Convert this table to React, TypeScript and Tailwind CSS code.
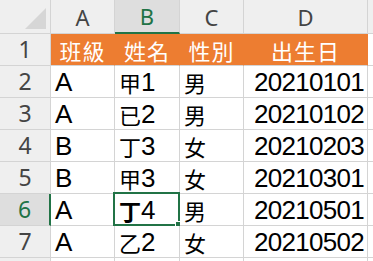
import React from 'react';

const COLS = ['A', 'B', 'C', 'D', ''];

const ROWS: string[][] = [
  ['班級', '姓名', '性別', '出生日'],
  ['A', '甲1', '男', '20210101'],
  ['A', '已2', '男', '20210102'],
  ['B', '丁3', '女', '20210203'],
  ['B', '甲3', '女', '20210301'],
  ['A', '丁4', '男', '20210501'],
  ['A', '乙2', '女', '20210502'],
  ['', '', '', ''],
];

const latin = '"Liberation Sans", Arial, sans-serif';
const cjk = '"Noto Sans CJK TC", "Noto Sans CJK SC", sans-serif';

// split text into CJK / latin runs so each gets its own font size
function CellText({ text, boldCjk }: { text: string; boldCjk?: boolean }) {
  const parts = text.match(/[\u3400-\u9fff]+|[^\u3400-\u9fff]+/g) || [];
  return (
    <>
      {parts.map((p, i) =>
        /[\u3400-\u9fff]/.test(p) ? (
          <span key={i} className={`text-[22px] ${boldCjk ? 'font-bold' : ''}`} style={{ fontFamily: cjk }}>
            {p}
          </span>
        ) : (
          <span key={i} className="text-[26px] tracking-[-0.7px]" style={{ fontFamily: latin }}>
            {p}
          </span>
        )
      )}
    </>
  );
}

export default function App() {
  return (
    <div className="w-[373px] h-[261px] overflow-hidden bg-white">
      <div className="grid grid-cols-[51px_64px_65px_64px_124px_20px] grid-rows-[34px_repeat(8,32px)]">
        {/* corner */}
        <div className="bg-[#efefef] border-r border-b border-[#d4d4d4] relative">
          <svg width="50" height="33" className="absolute left-0 top-0">
            <polygon points="46,8 46,29 25,29" fill="#d6d6d6" />
          </svg>
        </div>
        {COLS.map((c, i) => (
          <div
            key={i}
            className={`flex items-center justify-center border-r border-[#d4d4d4] text-[22px] leading-none ${
              c === 'B'
                ? 'bg-[#dedede] text-[#217346] border-b-2 border-b-[#217346]'
                : 'bg-[#efefef] text-[#444444] border-b border-b-[#d4d4d4]'
            }`}
            style={{ fontFamily: '"Noto Sans", "Open Sans", sans-serif' }}
          >
            {c}
          </div>
        ))}

        {ROWS.map((row, ri) => {
          const n = ri + 1;
          const sel = n === 6;
          return (
            <React.Fragment key={n}>
              <div
                className={`flex items-center justify-center border-b border-[#d4d4d4] text-[23px] leading-none ${
                  sel
                    ? 'bg-[#dedede] text-[#217346] border-r-2 border-r-[#217346]'
                    : 'bg-[#efefef] text-[#444444] border-r border-r-[#d4d4d4]'
                }`}
                style={{ fontFamily: '"Noto Sans", "Open Sans", sans-serif' }}
              >
                {n < 8 ? n : ''}
              </div>
              {row.map((v, ci) => {
                const head = n === 1;
                const isDate = ci === 3 && !head;
                const isSel = sel && ci === 1;
                return (
                  <div
                    key={ci}
                    className={`relative flex items-center leading-none ${
                      head
                        ? 'bg-[#ed7d31] text-white justify-center border-r border-b border-r-[#ed7d31] border-b-[#d4d4d4]'
                        : 'bg-white text-black border-r border-b border-[#d4d4d4]'
                    } ${isDate ? 'justify-end pr-[3px]' : head ? '' : 'pl-[4px]'}`}
                  >
                    {head ? (
                      <span className="text-[22px] tracking-[1px]" style={{ fontFamily: cjk }}>
                        {v}
                      </span>
                    ) : (
                      <CellText text={v} boldCjk={isSel} />
                    )}
                    {isSel && (
                      <div className="absolute -left-[2px] -top-[2px] -right-[1px] -bottom-[1px] border-2 border-[#217346]">
                        <div className="absolute -right-[4px] -bottom-[4px] w-[7px] h-[7px] bg-[#217346] border border-white" />
                      </div>
                    )}
                  </div>
                );
              })}
              <div className="bg-white border-r border-b border-[#d4d4d4]" />
            </React.Fragment>
          );
        })}
      </div>
    </div>
  );
}
